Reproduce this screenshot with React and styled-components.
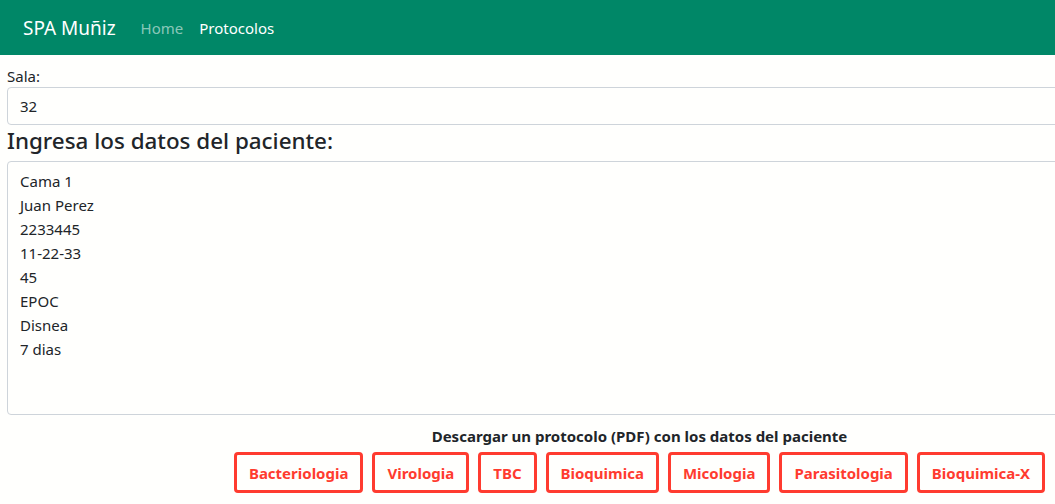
import React from "react";
import styled, { createGlobalStyle } from "styled-components";

const GlobalStyle = createGlobalStyle`
  body {
    margin: 0;
    background: #fffffd;
    font-family: "Noto Sans", "Open Sans", sans-serif;
    color: #212529;
  }
`;

const buttons = [
  "Bacteriologia",
  "Virologia",
  "TBC",
  "Bioquimica",
  "Micologia",
  "Parasitologia",
  "Bioquimica-X",
];

const pacienteText = `Cama 1
Juan Perez
2233445
11-22-33
45
EPOC
Disnea
7 dias`;

const App = () => {
  return (
    <Page>
      <GlobalStyle />
      <Navbar>
        <Brand>SPA Muñiz</Brand>
        <NavLink>Home</NavLink>
        <NavLink active>Protocolos</NavLink>
      </Navbar>
      <Main>
        <Label>Sala:</Label>
        <Input defaultValue="32" />
        <Heading>Ingresa los datos del paciente:</Heading>
        <TextArea defaultValue={pacienteText} />
        <Footer>
          <FooterTitle>
            Descargar un protocolo (PDF) con los datos del paciente
          </FooterTitle>
          <ButtonRow>
            {buttons.map((b) => (
              <ProtoButton key={b}>{b}</ProtoButton>
            ))}
          </ButtonRow>
        </Footer>
      </Main>
    </Page>
  );
};

const Page = styled.div`
  width: 1279px;
`;
const Navbar = styled.nav`
  display: flex;
  align-items: center;
  height: 55px;
  padding: 0 23px;
  background: #008767;
`;
const Brand = styled.span`
  font-size: 19px;
  color: #ffffff;
  margin-right: 25px;
`;
const NavLink = styled.span`
  font-size: 15px;
  color: ${(p) => (p.active ? "#ffffff" : "rgba(255,255,255,0.55)")};
  margin-right: 16px;
`;
const Main = styled.div`
  padding: 11px 7px 0;
  display: flex;
  flex-direction: column;
`;
const Label = styled.label`
  font-size: 15px;
  line-height: 20px;
  margin-bottom: 1px;
`;
const Input = styled.input`
  box-sizing: border-box;
  height: 38px;
  width: 100%;
  padding: 6px 12px;
  font-family: inherit;
  font-size: 15px;
  color: #212529;
  background: #fffffd;
  border: 1px solid #ced4da;
  border-radius: 4px;
  outline: none;
`;
const Heading = styled.h2`
  margin: 1px 0 5px;
  font-size: 22.4px;
  font-weight: 500;
  line-height: 30px;
`;
const TextArea = styled.textarea`
  box-sizing: border-box;
  width: 100%;
  height: 254px;
  padding: 7px 12px;
  font-family: inherit;
  font-size: 15px;
  line-height: 24px;
  color: #212529;
  background: #fffffd;
  border: 1px solid #ced4da;
  border-radius: 4px;
  resize: none;
  outline: none;
`;
const Footer = styled.div`
  display: flex;
  flex-direction: column;
  align-items: center;
  margin-top: 10px;
`;
const FooterTitle = styled.div`
  font-size: 15px;
  font-weight: 700;
  line-height: 22px;
`;
const ButtonRow = styled.div`
  display: flex;
  gap: 9px;
  margin-top: 5px;
`;
const ProtoButton = styled.button`
  box-sizing: border-box;
  height: 41px;
  padding: 0 12px;
  font-family: inherit;
  font-size: 15px;
  font-weight: 700;
  color: #ff3b2f;
  background: transparent;
  border: 3px solid #ff3b2f;
  border-radius: 4px;
`;

export default App;
